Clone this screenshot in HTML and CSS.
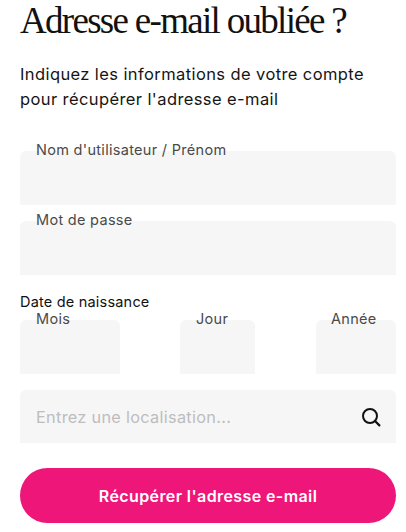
FILE: index.html
```html
<!DOCTYPE html>
<html lang="fr">
<head>
<meta charset="utf-8">
<title>Adresse e-mail oubliée ?</title>
<link rel="stylesheet" href="styles.css">
</head>
<body>
<main class="page">
  <h1 class="title">Adresse e-mail oubliée ?</h1>
  <p class="intro">Indiquez les informations de votre compte<br>pour récupérer l'adresse e-mail</p>
  <form class="form">
    <div class="field"><span class="label">Nom d'utilisateur / Prénom</span></div>
    <div class="field"><span class="label">Mot de passe</span></div>
    <div class="date-title">Date de naissance</div>
    <div class="date-row">
      <div class="field month"><span class="label">Mois</span></div>
      <div class="field day"><span class="label">Jour</span></div>
      <div class="field year"><span class="label">Année</span></div>
    </div>
    <div class="location">
      <span class="placeholder">Entrez une localisation...</span>
      <svg class="search" viewBox="0 0 20 20" width="20" height="20" aria-hidden="true">
        <circle cx="9" cy="9" r="7" fill="none" stroke="#111" stroke-width="2"></circle>
        <path d="M14 14l4.4 4.4" fill="none" stroke="#111" stroke-width="2.2" stroke-linecap="round"></path>
      </svg>
    </div>
    <button class="submit" type="button">Récupérer l'adresse e-mail</button>
  </form>
</main>
</body>
</html>
```
FILE: styles.css
```css
* { box-sizing: border-box; }
html, body { margin: 0; padding: 0; background: #fff; }
body { width: 406px; height: 532px; overflow: hidden; font-family: "Inter", "Open Sans", sans-serif; color: #111; }
.page { padding: 0 10px 0 20px; }
.title {
  margin: 0;
  height: 62px;
  font: 400 37px/42px "Liberation Serif", serif;
  letter-spacing: -1.7px;
  color: #111;
}
.intro {
  margin: 0;
  font-size: 16.5px;
  line-height: 25px;
  font-weight: 400;
  letter-spacing: 0.4px;
  color: #151515;
}
.form { display: flex; flex-direction: column; margin-top: 39px; }
.field {
  position: relative;
  height: 54px;
  margin-bottom: 16px;
  background: #f6f6f6;
  border-radius: 6px 6px 0 0;
}
.label {
  position: absolute;
  left: 16px;
  top: -10px;
  font-size: 14.5px;
  line-height: 18px;
  letter-spacing: 0.3px;
  color: #4a4a4a;
  white-space: nowrap;
}
.date-title {
  margin-top: 1px;
  height: 28px;
  font-size: 14.5px;
  line-height: 18px;
  letter-spacing: 0.2px;
  color: #111;
  padding-top: 1px;
}
.date-row { display: flex; }
.month { width: 100px; margin-right: 60px; }
.day { width: 75px; margin-right: auto; }
.year { width: 80px; }
.day .label { left: 16px; }
.year .label { left: 15px; }
.location {
  display: flex;
  align-items: center;
  justify-content: space-between;
  height: 53px;
  padding: 0 14px 0 16px;
  background: #f6f6f6;
  border-radius: 6px 6px 0 0;
}
.placeholder { font-size: 16.3px; letter-spacing: 0.3px; color: #bdbdbd; }
.search { display: block; margin-right: 1px; }
.submit {
  display: block;
  width: 100%;
  height: 55px;
  margin-top: 25px;
  border: 0;
  border-radius: 28px;
  background: #ee1679;
  color: #fff;
  font: 600 16px/20px "Inter", "Open Sans", sans-serif;
  letter-spacing: 0.4px;
}
```
